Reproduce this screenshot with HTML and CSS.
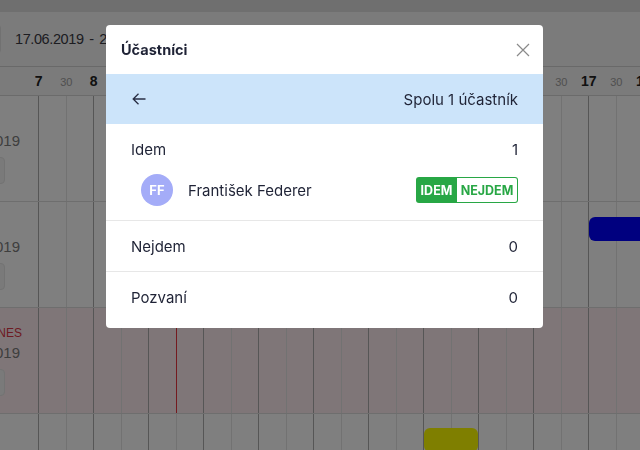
FILE: index.html
```html
<!DOCTYPE html>
<html lang="sk">
<head>
<meta charset="utf-8">
<title>Účastníci</title>
<link rel="stylesheet" href="styles.css">
</head>
<body>
<div class="page">
  <div class="topstrip"></div>
  <div class="toolbar">
    <div class="tool-btn"></div>
    <div class="range">17.06.2019 - 23.06.2019</div>
  </div>
  <div class="hours">
    <div class="hour"><span class="h">7</span><span class="m">30</span></div>
    <div class="hour"><span class="h">8</span><span class="m">30</span></div>
    <div class="hour"><span class="h">9</span><span class="m">30</span></div>
    <div class="hour"><span class="h">10</span><span class="m">30</span></div>
    <div class="hour"><span class="h">11</span><span class="m">30</span></div>
    <div class="hour"><span class="h">12</span><span class="m">30</span></div>
    <div class="hour"><span class="h">13</span><span class="m">30</span></div>
    <div class="hour"><span class="h">14</span><span class="m">30</span></div>
    <div class="hour"><span class="h">15</span><span class="m">30</span></div>
    <div class="hour"><span class="h">16</span><span class="m">30</span></div>
    <div class="hour"><span class="h">17</span><span class="m">30</span></div>
    <div class="hour"><span class="h">18</span><span class="m">30</span></div>
  </div>
  <div class="rows">
    <div class="row">
      <div class="label"><span class="day"></span><span class="date">17.06.2019</span><span class="lbtn"></span></div>
      <div class="track"></div>
    </div>
    <div class="row">
      <div class="label"><span class="day"></span><span class="date">18.06.2019</span><span class="lbtn"></span></div>
      <div class="track"><div class="event event-blue"></div></div>
    </div>
    <div class="row row-today">
      <div class="label"><span class="day today">DNES</span><span class="date">19.06.2019</span><span class="lbtn"></span></div>
      <div class="track"><div class="now-line"></div></div>
    </div>
    <div class="row">
      <div class="label"><span class="day"></span><span class="date">20.06.2019</span><span class="lbtn"></span></div>
      <div class="track"><div class="event event-yellow"></div></div>
    </div>
  </div>
</div>

<div class="overlay"></div>

<div class="modal">
  <div class="modal-header">
    <h2 class="modal-title">Účastníci</h2>
    <button class="close" aria-label="Zavrieť">
      <svg width="14" height="14" viewBox="0 0 14 14"><path d="M1 1L13 13M13 1L1 13" stroke="#8a8a8a" stroke-width="1.2" fill="none"/></svg>
    </button>
  </div>
  <div class="modal-bar">
    <svg class="back" width="14" height="12" viewBox="0 0 14 12"><path d="M13.5 6H1.2M6.5 0.8L1.2 6l5.3 5.2" stroke="#2a2f45" stroke-width="1.3" fill="none"/></svg>
    <span class="total">Spolu 1 účastník</span>
  </div>
  <div class="section">
    <div class="section-head"><span>Idem</span><span>1</span></div>
    <div class="person">
      <div class="avatar">FF</div>
      <div class="name">František Federer</div>
      <div class="toggle"><span class="opt opt-on">IDEM</span><span class="opt opt-off">NEJDEM</span></div>
    </div>
  </div>
  <div class="section">
    <div class="section-head"><span>Nejdem</span><span>0</span></div>
  </div>
  <div class="section">
    <div class="section-head"><span>Pozvaní</span><span>0</span></div>
  </div>
</div>
</body>
</html>
```

FILE: styles.css
```css
* { box-sizing: border-box; }
html, body { margin: 0; padding: 0; }
body {
  width: 640px;
  height: 450px;
  overflow: hidden;
  font-family: "Liberation Sans", Arial, sans-serif;
  background: #fff;
}
.page { width: 640px; height: 450px; overflow: hidden; }
.topstrip { height: 12px; background: #dedede; }
.toolbar {
  height: 55px;
  background: #f6f6f6;
  border-bottom: 1px solid #d2d2d2;
  display: flex;
  align-items: center;
}
.tool-btn {
  width: 41px;
  height: 30px;
  margin-left: -40px;
  border: 1px solid #e2e2e2;
  border-radius: 4px;
  background: #fafafa;
}
.range {
  margin-left: 14px;
  font-size: 14.5px;
  letter-spacing: -0.4px;
  word-spacing: 2px;
  color: #3a3a44;
  white-space: nowrap;
}
.hours {
  height: 29px;
  background: #f6f6f6;
  border-bottom: 1px solid #d6d6d6;
  display: flex;
  padding-left: 25px;
  padding-top: 6px;
  overflow: hidden;
}
.hour { flex: 0 0 55px; display: flex; align-items: baseline; }
.hour span { flex: 0 0 27.5px; text-align: center; line-height: 16px; }
.h { font-size: 14px; font-weight: bold; color: #222; }
.m { font-size: 11px; color: #a0a0a0; }

.row {
  display: flex;
  height: 106px;
  border-bottom: 1px solid #dcdcdc;
}
.row-today { background: #ffedf1; }
.label {
  flex: 0 0 38px;
  overflow: hidden;
  display: flex;
  flex-direction: column;
  align-items: flex-end;
  padding-top: 15px;
  white-space: nowrap;
}
.day {
  height: 21px;
  margin-right: 16px;
  font-size: 12px;
  line-height: 21px;
}
.today { color: #dc3545; }
.date {
  margin-right: 18px;
  font-size: 15px;
  line-height: 18px;
  color: #7c7c7c;
}
.lbtn {
  margin-top: 7px;
  margin-right: 33px;
  width: 60px;
  height: 27px;
  border: 1px solid #e6e6e6;
  border-radius: 4px;
  background: #f4f4f4;
}
.track {
  flex: 1;
  position: relative;
  background-image:
    linear-gradient(to right, #acacac 1px, transparent 1px),
    linear-gradient(to right, #e4e4e4 1px, transparent 1px);
  background-size: 55px 100%, 55px 100%;
  background-position: 0 0, 28px 0;
}
.event { position: absolute; height: 24px; border-radius: 6px; }
.event-blue { left: 551px; top: 15px; width: 70px; background: #0000ff; }
.event-yellow { left: 386px; top: 14px; width: 54px; background: #ffff00; }
.now-line { position: absolute; left: 138px; top: 0; bottom: 0; width: 1px; background: #e8353f; }

.overlay {
  position: fixed;
  inset: 0;
  background: rgba(0, 0, 0, 0.5);
}

.modal {
  position: absolute;
  left: 106px;
  top: 25px;
  width: 437px;
  background: #fff;
  border-radius: 4px;
  padding-bottom: 6px;
  font-family: Inter, "Noto Sans", sans-serif;
  color: #1f2336;
  overflow: hidden;
}
.modal-header {
  height: 49px;
  display: flex;
  align-items: center;
  justify-content: space-between;
  padding: 0 13px 0 15px;
}
.modal-title { margin: 0; font-size: 14.5px; font-weight: 700; }
.close {
  border: 0;
  background: none;
  padding: 0;
  width: 14px;
  height: 14px;
  display: flex;
}
.modal-bar {
  height: 50px;
  background: #cce4fa;
  display: flex;
  align-items: center;
  justify-content: space-between;
  padding: 0 25px 0 26px;
  font-size: 15px;
}
.back { display: block; }
.section + .section { border-top: 1px solid #e7e7e7; }
.section-head {
  height: 50px;
  display: flex;
  align-items: center;
  justify-content: space-between;
  padding: 0 25px;
  font-size: 15px;
}
.section:first-of-type .section-head { height: 49px; }
.person {
  display: flex;
  align-items: center;
  padding: 0 25px 14px 35px;
}
.avatar {
  width: 32px;
  height: 32px;
  border-radius: 50%;
  background: #a4acf8;
  color: #fff;
  font-size: 13px;
  font-weight: 700;
  display: flex;
  align-items: center;
  justify-content: center;
}
.name { margin-left: 15px; font-size: 15px; flex: 1; }
.toggle { display: flex; height: 26px; }
.opt {
  display: flex;
  align-items: center;
  padding: 0 5px;
  font-size: 12.5px;
  font-weight: 700;
}
.opt-on {
  background: #28a745;
  color: #fff;
  border-radius: 3px 0 0 3px;
  width: 41px;
  justify-content: center;
}
.opt-off {
  border: 1px solid #28a745;
  border-left: 0;
  color: #28a745;
  border-radius: 0 3px 3px 0;
  width: 61px;
  justify-content: center;
}
```
